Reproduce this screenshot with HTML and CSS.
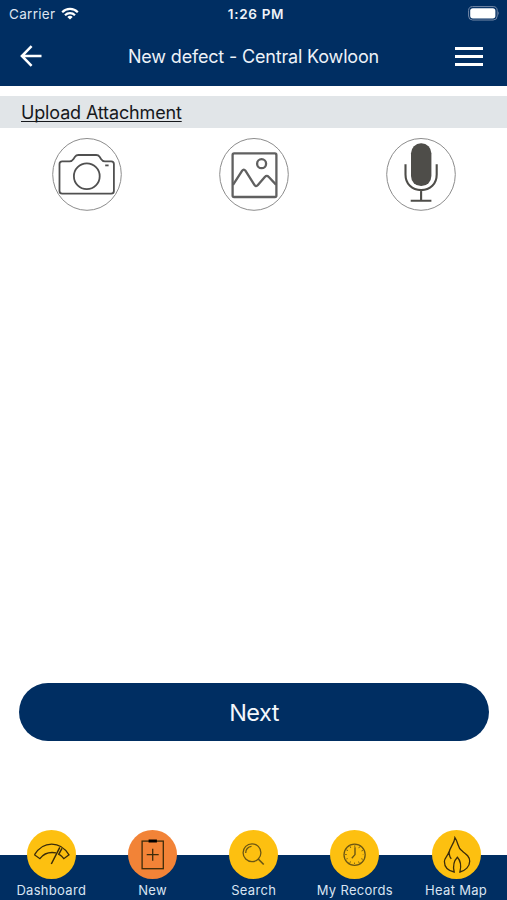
FILE: index.html
```html
<!DOCTYPE html>
<html lang="en">
<head>
  <meta charset="UTF-8">
  <meta name="viewport" content="width=device-width, initial-scale=1">
  <title>New defect</title>
  <link rel="stylesheet" href="styles.css">
</head>
<body>
  <header class="header">
    <div class="status-bar">
      <div class="carrier">
        <span>Carrier</span>
        <svg class="wifi" viewBox="0 0 18 13" fill="none" stroke="#fff" stroke-width="2.2">
          <path d="M1.2 5.2 A11 11 0 0 1 16.8 5.2"/>
          <path d="M4 8.2 A7 7 0 0 1 14 8.2"/>
          <path d="M9 12.6 L6.3 10 A3.9 3.9 0 0 1 11.7 10 Z" fill="#fff" stroke="none"/>
        </svg>
      </div>
      <span class="time">1:26 PM</span>
      <svg class="battery" viewBox="0 0 32 15">
        <rect x="0.6" y="0.6" width="28.6" height="13.4" rx="4" fill="none" stroke="#7589a8"/>
        <rect x="2.2" y="2.2" width="25.2" height="10.2" rx="2.6" fill="#fff"/>
        <path d="M30.4 5.2 Q32 7.3 30.4 9.4 Z" fill="#8394b0"/>
      </svg>
    </div>
    <div class="nav-bar">
      <svg class="back" viewBox="0 0 22 22" fill="none" stroke="#fff" stroke-width="2.5">
        <path d="M21.5 11 H2 M11.6 1.2 L1.9 11 L11.6 20.8"/>
      </svg>
      <h1 class="title">New defect - Central Kowloon</h1>
      <div class="menu"><span></span><span></span><span></span></div>
    </div>
  </header>

  <main class="main">
    <h2 class="section-title"><span>Upload Attachment</span></h2>
    <div class="attachments">
      <svg class="attachment" viewBox="0 0 70 73" fill="none" stroke="#505050" stroke-width="1.8">
        <ellipse class="ring" cx="35" cy="36.4" rx="34.3" ry="35.9"/>
        <path d="M10.2 23.3 H17.5 Q20 23.3 21.5 21 L23 18.8 Q24.2 17 26.4 17 H44.2 Q46.4 17 47.6 18.8 L49 21 Q50.4 23.3 53 23.3 H59.2 Q61.9 23.3 61.9 26 V53 Q61.9 55.6 59.2 55.6 H10.2 Q7.5 55.6 7.5 53 V26 Q7.5 23.3 10.2 23.3 Z"/>
        <circle cx="34.8" cy="38.2" r="12.9"/>
        <path d="M53.2 27.4 H56.6"/>
      </svg>
      <svg class="attachment" viewBox="0 0 70 73" fill="none" stroke="#606060" stroke-width="2.3" stroke-linejoin="round">
        <ellipse class="ring" cx="35" cy="36.4" rx="34.3" ry="35.9"/>
        <rect x="13.6" y="15.4" width="43.8" height="43.6" rx="1.5"/>
        <circle cx="42.6" cy="25.7" r="4.5"/>
        <path d="M14 46.8 L23.2 32.7 Q24.8 30.4 26.4 32.7 L35.4 46.8 Q37 49.2 38.9 47 L45.8 39 Q47.8 36.9 49.8 39 L57 46.6"/>
      </svg>
      <svg class="attachment" viewBox="0 0 70 73" fill="none" stroke="#4e4d49" stroke-width="2.1">
        <ellipse class="ring" cx="35" cy="36.4" rx="34.3" ry="35.9"/>
        <rect x="25" y="5.3" width="20.4" height="42.8" rx="10" fill="#4e4d49" stroke="none"/>
        <path d="M19.5 26.3 V36.5 C19.5 46 26 52.1 35.1 52.1 C44.2 52.1 50.7 46 50.7 36.5 V26.3 M35.1 52 V62.7 M24.7 62.8 H45.4"/>
      </svg>
    </div>
    <button class="next-btn">Next</button>
  </main>

  <nav class="tab-bar">
    <a class="tab">
      <svg class="tab-icon" viewBox="0 0 49 49">
        <path d="M7.4 24.8 C12 17.5 17.8 14.1 24.7 14.1 S37.4 17.5 42 24.8 L36.8 28.7 C35.4 26.8 33.8 25.4 32.2 24.4 M29 22.9 C23 21.8 17 23.2 12.9 28.7 L7.4 24.8"/>
        <path d="M32.8 17.3 L24.3 34 M35 18.4 L31.4 24.8" stroke-width="1.5"/>
      </svg>
      <span>Dashboard</span>
    </a>
    <a class="tab active">
      <svg class="tab-icon" viewBox="0 0 49 49">
        <rect x="14.1" y="11.1" width="21.2" height="27.6"/>
        <path d="M20.6 11 H28.9" stroke="#000" stroke-width="3.2"/>
        <path d="M24.7 18.7 V30.7 M18.7 24.7 H30.7"/>
      </svg>
      <span>New</span>
    </a>
    <a class="tab">
      <svg class="tab-icon light" viewBox="0 0 49 49">
        <circle cx="23" cy="22.7" r="8.9"/>
        <path d="M16.7 23 A6.3 6.3 0 0 1 22.5 16.4"/>
        <path d="M29.2 29 L34.7 34.5" stroke-width="1.7"/>
      </svg>
      <span>Search</span>
    </a>
    <a class="tab">
      <svg class="tab-icon light" viewBox="0 0 49 49">
        <circle cx="24.6" cy="24.7" r="10.6"/>
        <circle cx="24.6" cy="24.7" r="8.6" stroke-width="1.6" stroke-dasharray="0.8 3.703" stroke-dashoffset="0.4"/>
        <path d="M25 17.3 V24.6 L21.8 28.2" stroke-width="1.4"/>
      </svg>
      <span>My Records</span>
    </a>
    <a class="tab">
      <svg class="tab-icon" viewBox="0 0 49 49">
        <path d="M22.2 42 C16 40.7 12.4 36.9 12.4 31.5 C12.4 28 15.7 26.2 17 21.8 C17.5 24.8 17.2 26.8 19.2 28.9 C17.8 26.8 17.2 25.4 17 23.2 C17.2 17.6 22.3 14.2 22.9 7.7 C26.6 13 25.4 17.3 29.6 20.6 C34 24 37.7 26.4 37.7 31.2 C37.7 36.6 33.3 40.8 27.9 42 C29.3 36.4 28.9 31 25.4 27.3 C21.8 31 20.9 36.6 22.2 42 Z"/>
      </svg>
      <span>Heat Map</span>
    </a>
  </nav>
</body>
</html>
```
FILE: styles.css
```css
* { margin: 0; padding: 0; box-sizing: border-box; }
body {
  font-family: Inter, "Liberation Sans", sans-serif;
  background-color: #fff;
  width: 507px;
  height: 900px;
  overflow: hidden;
  display: flex;
  flex-direction: column;
}
svg { display: block; }
.header {
  height: 86px;
  background-color: #002e62;
  color: #fff;
}
.status-bar {
  display: grid;
  grid-template-columns: 1fr auto 1fr;
  align-items: center;
  height: 27px;
  padding: 0 6px 0 9px;
  font-size: 13.5px;
}
.carrier {
  display: flex;
  align-items: center;
  gap: 6px;
  color: #dde5f0;
  letter-spacing: 0.3px;
}
.wifi {
  width: 18px;
  height: 13px;
}
.time {
  padding-left: 2px;
  font-weight: 600;
  color: #eef2f8;
  letter-spacing: 0.7px;
}
.battery {
  width: 32px;
  height: 15px;
  margin-right: 1px;
  justify-self: end;
}
.nav-bar {
  display: grid;
  grid-template-columns: 28px 1fr 28px;
  align-items: center;
  height: 58px;
  padding: 0 24px 0 20px;
}
.back {
  width: 22px;
  height: 22px;
}
.title {
  padding-left: 4px;
  font-size: 18px;
  font-weight: 400;
  letter-spacing: -0.17px;
  text-align: center;
  color: #edf2f8;
}
.menu {
  display: flex;
  flex-direction: column;
  gap: 5px;
  width: 28px;
}
.menu span {
  height: 3px;
  background-color: #fff;
}
.main {
  flex: 1;
  display: flex;
  flex-direction: column;
}
.section-title {
  height: 32px;
  margin-top: 10px;
  padding-left: 21px;
  background-color: #e1e5e8;
  color: #16181c;
  font-size: 18px;
  line-height: 33px;
  font-weight: 400;
  letter-spacing: -0.15px;
}
.section-title span {
  text-decoration: underline;
  text-decoration-thickness: 1px;
  text-underline-offset: 2px;
  text-decoration-skip-ink: none;
}
.attachments {
  display: flex;
  justify-content: space-between;
  padding: 10px 51px 0 52px;
}
.attachment {
  width: 70px;
  height: 73px;
}
.ring {
  stroke: #8c8c8c;
  stroke-width: 1;
}
.next-btn {
  height: 58.5px;
  margin: auto 18px 89px 19px;
  padding-top: 2px;
  border: none;
  border-radius: 30px;
  background-color: #002e62;
  color: #f4f7fb;
  font-family: inherit;
  font-size: 23.5px;
  letter-spacing: -0.6px;
}
.tab-bar {
  display: grid;
  grid-template-columns: repeat(5, 101.2px);
  justify-content: center;
  height: 70px;
  padding-left: 0.4px;
  background: linear-gradient(transparent 24.7px, #002e62 24.7px);
}
.tab {
  display: flex;
  flex-direction: column;
  align-items: center;
  gap: 3px;
  color: #d9e4f2;
  font-size: 13px;
  line-height: 16px;
  letter-spacing: 0.3px;
}
.tab-icon {
  width: 49px;
  height: 49px;
  border-radius: 50%;
  background-color: #fdc010;
  fill: none;
  stroke: #3b2c0b;
  stroke-width: 1.3;
}
.tab-icon.light {
  stroke: #6b5614;
}
.active .tab-icon {
  background-color: #f28337;
}
```
